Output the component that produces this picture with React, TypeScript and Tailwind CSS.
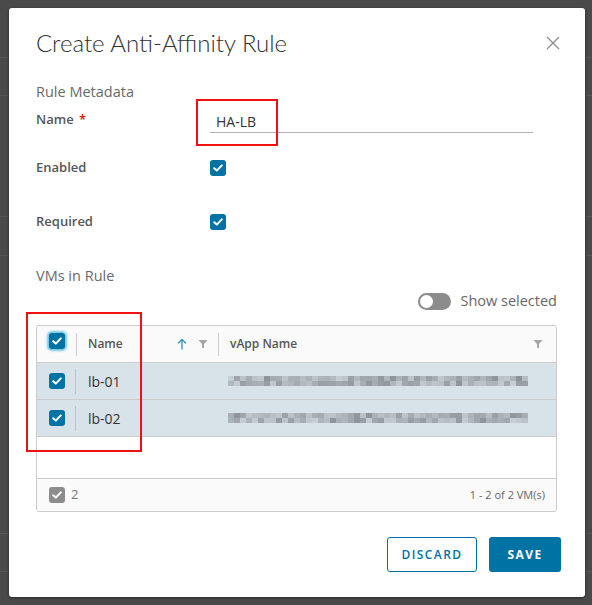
import React from 'react'

// ---------------------------------------------------------------------------
// Small drawings
// ---------------------------------------------------------------------------

const Check: React.FC<{ gray?: boolean; className?: string }> = ({ gray = false, className = '' }) => (
  <span
    className={`flex h-4 w-4 shrink-0 items-center justify-center rounded-[3px] ${gray ? 'bg-[#8c8c8c]' : 'bg-[#0072a3]'} ${className}`}
  >
    <svg width="10" height="8" viewBox="0 0 10 8" fill="none">
      <path d="M1.2 4.2 L3.8 6.6 L8.8 1.4" stroke="white" strokeWidth="2" strokeLinecap="round" strokeLinejoin="round" />
    </svg>
  </span>
)

const Funnel: React.FC = () => (
  <svg width="10" height="10" viewBox="0 0 10 10">
    <path d="M0.5 1 H9.5 L6 5 V9.5 L4 8.5 V5 Z" fill="#a6a6a6" />
  </svg>
)

const ArrowUp: React.FC = () => (
  <svg width="10" height="12" viewBox="0 0 10 12" fill="none">
    <path d="M5 11.5 V1.5 M1.2 5.2 L5 1.4 L8.8 5.2" stroke="#3d93c5" strokeWidth="1.4" />
  </svg>
)

/** Pixelated redaction of the vApp name (blurred in the original). */
const Redacted: React.FC<{ width: number; seed: number }> = ({ width, seed }) => {
  const cols = Math.floor(width / 6)
  const shade = (i: number, r: number) => {
    const v = Math.abs(Math.sin((i + 1) * 12.9898 + seed * 78.233 + r * 37.719) * 43758.5453) % 1
    const g = Math.round(150 + v * 60)
    return `rgb(${g - 10}, ${g - 2}, ${g + 4})`
  }
  return (
    <svg width={width} height="10" viewBox={`0 0 ${width} 10`}>
      {Array.from({ length: cols }).map((_, i) => (
        <g key={i}>
          <rect x={i * 6} y={0} width={6} height={5} fill={shade(i, 0)} />
          <rect x={i * 6} y={5} width={6} height={5} fill={shade(i, 1)} />
        </g>
      ))}
    </svg>
  )
}

// ---------------------------------------------------------------------------
// Page
// ---------------------------------------------------------------------------

const VMS = [
  { name: 'lb-01', blur: 305 },
  { name: 'lb-02', blur: 300 },
]

export default function App() {
  return (
    <div
      className="relative h-[605px] w-[592px] overflow-hidden bg-[#4a4a4a]"
      style={{ fontFamily: '"Open Sans", Lato, sans-serif' }}
    >
      {/* underlying page rows behind the backdrop */}
      <div className="flex flex-col">
        <div className="h-[58px] border-b border-[#575757]" />
        <div className="h-[38px] border-b border-[#575757]" />
        <div className="h-[121px] border-b border-[#575757]" />
        <div className="h-[39px] border-b border-[#575757]" />
        <div className="h-[278px] border-b border-[#575757]" />
        <div className="h-[38px] border-b border-[#575757]" />
      </div>

      {/* modal */}
      <div className="absolute left-[9px] top-[8px] flex h-[589px] w-[576px] flex-col rounded-[3px] bg-white pl-[27px] pr-[28px] pt-[21px] shadow-[0_1px_3px_rgba(0,0,0,0.5)]">
        <div className="flex h-[28px] items-center justify-between">
          <h1 className="font-['Lato',sans-serif] text-[24px] font-light leading-[28px] text-[#313131]">
            Create Anti-Affinity Rule
          </h1>
          <svg width="14" height="14" viewBox="0 0 14 14" className="mr-[-3px]">
            <path d="M1 1 L13 13 M13 1 L1 13" stroke="#8c8c8c" strokeWidth="1.3" />
          </svg>
        </div>

        <div className="mt-[25px] flex h-[20px] items-center text-[14.5px] text-[#6a6a6a]">Rule Metadata</div>

        <div className="flex h-[36px] items-center">
          <label className="w-[174px] text-[13px] font-semibold text-[#565656]">
            Name <span className="ml-[2px] text-[#c92100]">*</span>
          </label>
          <div className="flex h-[26px] w-[323px] items-center border-b border-[#b3b3b3] pl-[6px] pt-[4px] text-[14px] text-[#333]">
            HA-LB
          </div>
        </div>

        <div className="mt-[12px] flex h-[36px] items-center">
          <label className="w-[174px] text-[13px] font-semibold text-[#565656]">Enabled</label>
          <Check />
        </div>

        <div className="mt-[18px] flex h-[36px] items-center">
          <label className="w-[174px] text-[13px] font-semibold text-[#565656]">Required</label>
          <Check />
        </div>

        <div className="mt-[26px] flex h-[20px] items-center text-[14.5px] text-[#6a6a6a]">VMs in Rule</div>

        <div className="mt-[5px] flex h-[20px] items-center justify-end gap-[9px]">
          <span className="flex h-[17px] w-[33px] items-center rounded-full bg-[#8c8c8c] px-[2px]">
            <span className="h-[13px] w-[13px] rounded-full bg-white" />
          </span>
          <span className="text-[14.5px] text-[#666]">Show selected</span>
        </div>

        {/* datagrid */}
        <div className="mt-[14px] flex h-[187px] flex-col overflow-hidden rounded-[3px] border border-[#cccccc]">
          <div className="flex h-[37px] shrink-0 items-center border-b border-[#cccccc] bg-[#fafafa]">
            <div className="flex w-[39px] items-center pl-[12px]">
              <Check className="-mt-[6px] shadow-[0_0_2px_2px_#79c6e6]" />
            </div>
            <div className="flex h-[23px] w-[142px] items-center border-l border-[#cccccc] pl-[11px] pr-[10px]">
              <span className="flex-1 text-[12px] font-semibold text-[#565656]">Name</span>
              <ArrowUp />
              <span className="ml-[11px]">
                <Funnel />
              </span>
            </div>
            <div className="flex h-[23px] flex-1 items-center border-l border-[#cccccc] pl-[11px] pr-[13px]">
              <span className="flex-1 text-[12px] font-semibold text-[#565656]">vApp Name</span>
              <Funnel />
            </div>
          </div>

          {VMS.map((vm) => (
            <div key={vm.name} className="flex h-[37px] shrink-0 items-center border-b border-[#cccccc] bg-[#d8e3e9]">
              <div className="flex w-[38px] items-center pl-[12px]">
                <Check />
              </div>
              <div className="flex h-[25px] w-[143px] items-center border-l border-[#b9c4ca] pl-[12px] text-[14px] text-[#333]">
                {vm.name}
              </div>
              <div className="flex flex-1 items-center pl-[10px]">
                <Redacted width={vm.blur} seed={vm.name.length + vm.blur} />
              </div>
            </div>
          ))}

          <div className="h-[41px] shrink-0" />

          <div className="flex h-[33px] shrink-0 items-center border-t border-[#cccccc] bg-[#fafafa] pl-[12px] pr-[11px]">
            <Check gray />
            <span className="ml-[6px] flex-1 text-[13px] text-[#777]">2</span>
            <span className="text-[11px] text-[#666]">1 - 2 of 2 VM(s)</span>
          </div>
        </div>

        <div className="mr-[-4px] mt-[25px] flex justify-end gap-[12px]">
          <button className="flex h-[35px] w-[90px] items-center justify-center rounded-[3px] border border-[#0072a3] bg-white text-[12px] font-semibold tracking-[0.12em] text-[#0072a3]">
            DISCARD
          </button>
          <button className="flex h-[35px] w-[72px] items-center justify-center rounded-[3px] bg-[#0072a3] text-[12px] font-bold tracking-[0.12em] text-white">
            SAVE
          </button>
        </div>
      </div>

      {/* red annotation boxes */}
      <div className="absolute left-[196px] top-[99px] h-[47px] w-[82px] border-2 border-[#ee1111]" />
      <div className="absolute left-[26px] top-[312px] h-[140px] w-[116px] border-[2.5px] border-[#ee1111]" />
    </div>
  )
}
